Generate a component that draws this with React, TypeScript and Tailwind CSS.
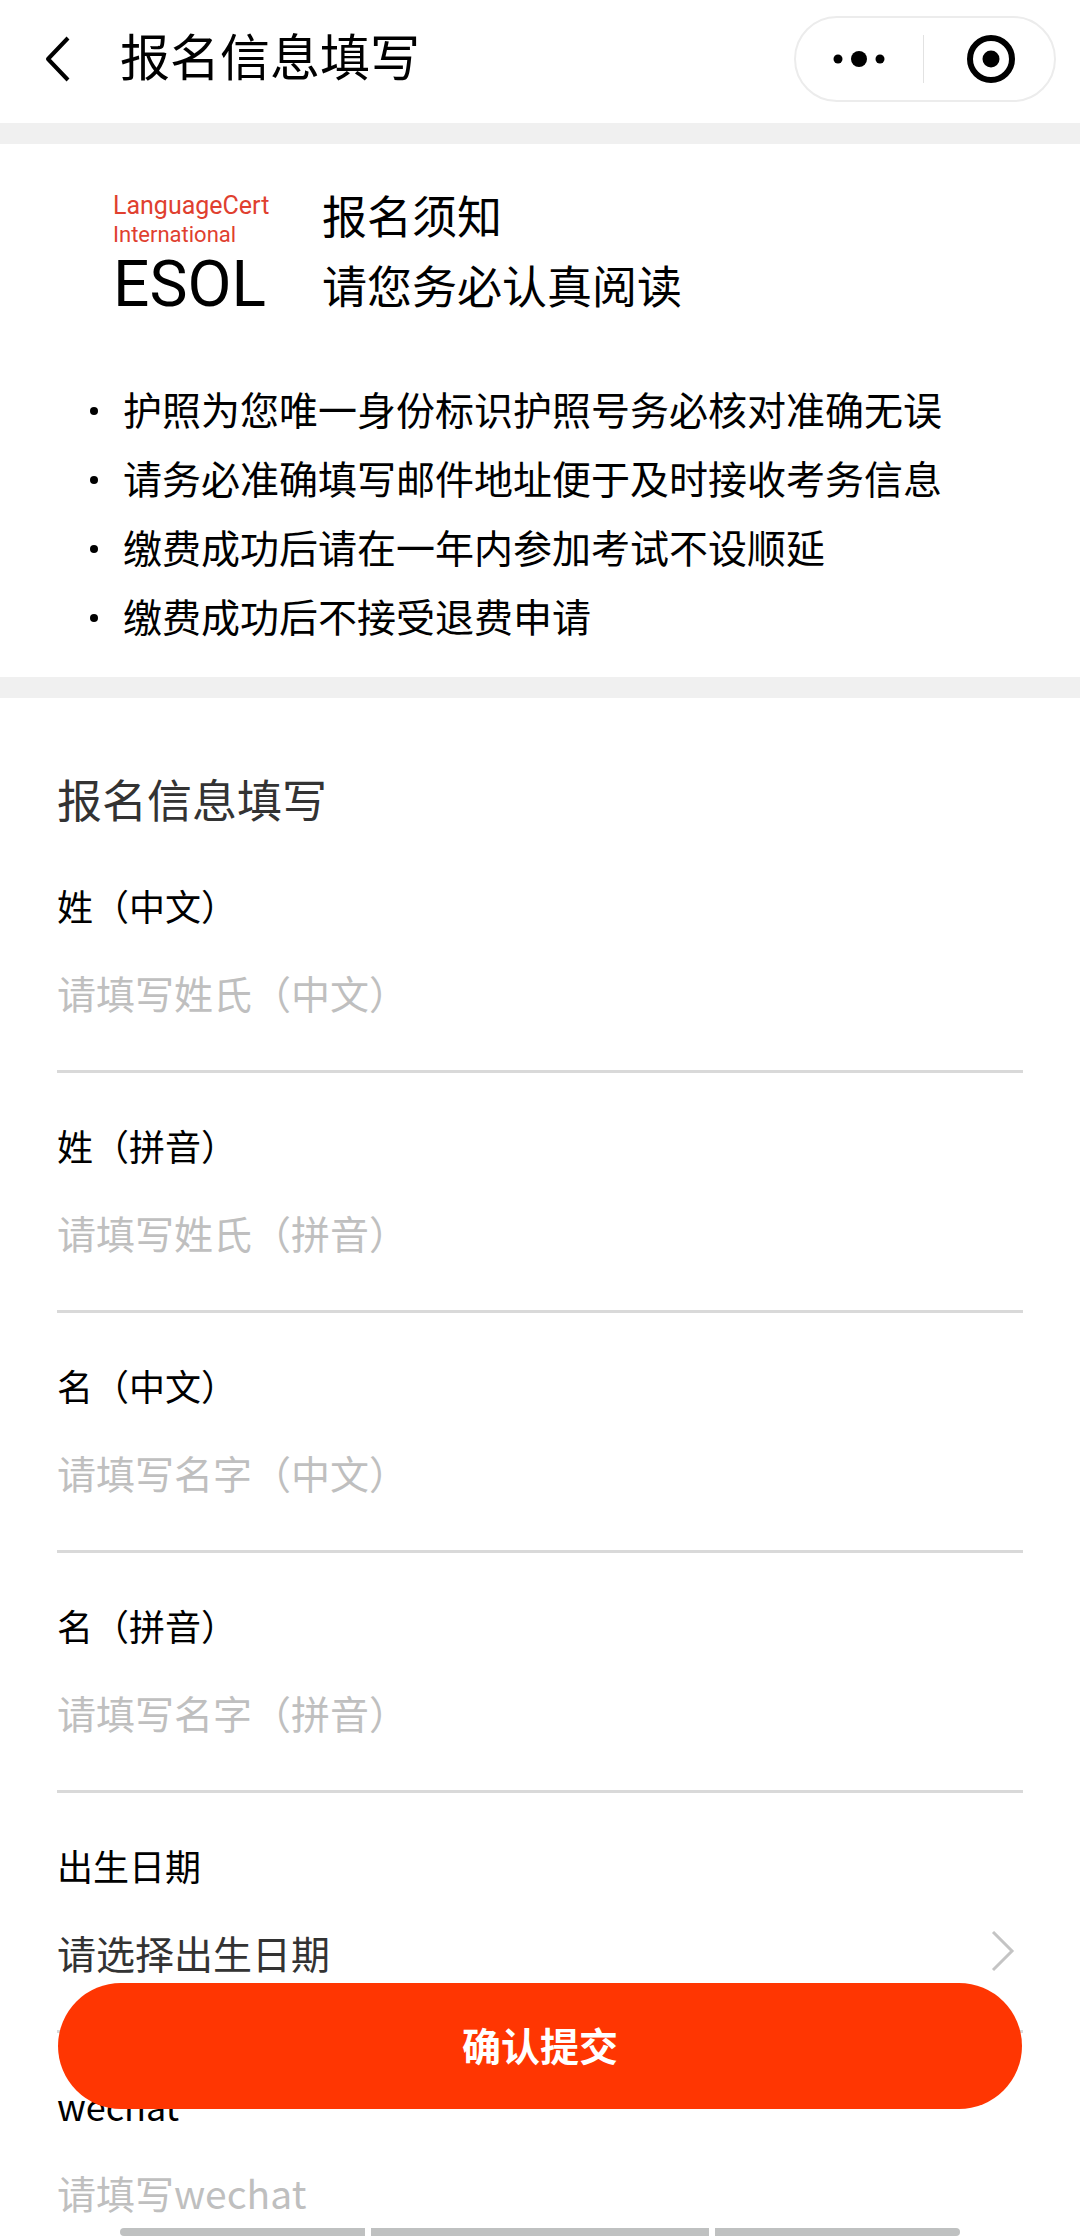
import { useState } from "react";

const notices = [
  "护照为您唯一身份标识护照号务必核对准确无误",
  "请务必准确填写邮件地址便于及时接收考务信息",
  "缴费成功后请在一年内参加考试不设顺延",
  "缴费成功后不接受退费申请",
];

const nameFields = [
  { id: "surname-zh", label: "姓（中文）", placeholder: "请填写姓氏（中文）" },
  { id: "surname-py", label: "姓（拼音）", placeholder: "请填写姓氏（拼音）" },
  { id: "given-zh", label: "名（中文）", placeholder: "请填写名字（中文）" },
  { id: "given-py", label: "名（拼音）", placeholder: "请填写名字（拼音）" },
];

type FieldProps = { id: string; label: string; placeholder: string };

function TextField({ id, label, placeholder }: FieldProps) {
  const [value, setValue] = useState("");

  return (
    <div className="border-b-[3px] border-[#d9d9d9] pt-[45px] pb-[39px]">
      <label htmlFor={id} className="block text-[36px] leading-[54px] text-black">
        {label}
      </label>
      <input
        id={id}
        type="text"
        value={value}
        onChange={(e) => setValue(e.target.value)}
        placeholder={placeholder}
        className="mt-[21px] block h-[78px] w-full bg-transparent text-[39px] text-[#333] outline-none placeholder:text-[#bfbfbf]"
      />
    </div>
  );
}

function Header() {
  return (
    <header className="flex h-[123px] shrink-0 items-start justify-between pr-6 pl-11">
      <div className="flex h-[117px] items-center">
        <button type="button" aria-label="返回" className="flex">
          <svg width="28" height="48" viewBox="0 0 28 48" fill="none" stroke="#000" strokeWidth="4">
            <path d="M24 3 L4 24 L24 45" strokeLinejoin="round" />
          </svg>
        </button>
        <h1 className="ml-12 pb-2.5 text-[50px] leading-[64px] text-black">报名信息填写</h1>
      </div>

      {/* Mini program capsule */}
      <div className="mt-4 flex h-[86px] w-[262px] items-center rounded-full border-2 border-[#ececec]">
        <button type="button" aria-label="更多" className="flex flex-1 justify-center">
          <svg width="54" height="20" viewBox="0 0 54 20">
            <circle cx="6" cy="10" r="4.5" />
            <circle cx="27" cy="10" r="8" />
            <circle cx="48" cy="10" r="4.5" />
          </svg>
        </button>
        <span className="h-12 w-px bg-[#e2e2e2]" />
        <button type="button" aria-label="关闭" className="flex flex-1 justify-center pl-1">
          <svg width="50" height="50" viewBox="0 0 50 50">
            <circle cx="25" cy="25" r="21" fill="none" stroke="#000" strokeWidth="6" />
            <circle cx="25" cy="25" r="8.5" />
          </svg>
        </button>
      </div>
    </header>
  );
}

function Logo() {
  return (
    <div className="flex w-[210px] shrink-0 flex-col pt-[11px] pl-px font-['Roboto',sans-serif]">
      <span className="text-[25px] leading-[29px] text-[#e0402f]">LanguageCert</span>
      <span className="text-[22px] leading-[29px] text-[#e0402f]">International</span>
      <span className="text-[64px] leading-[71px] text-black">ESOL</span>
    </div>
  );
}

export default function App() {
  return (
    <div className="relative flex h-screen flex-col overflow-hidden bg-white font-['Noto_Sans_CJK_SC',sans-serif]">
      <Header />

      <main className="min-h-0 flex-1 overflow-hidden">
        <section className="border-y-[21px] border-[#f0f0f0] pt-[36px] pb-[27px]">
          <div className="flex pl-28">
            <Logo />
            <div className="text-[45px] leading-[70px] text-black">
              <h2>报名须知</h2>
              <p>请您务必认真阅读</p>
            </div>
          </div>
          <ul className="mt-[54px] pl-[90px]">
            {notices.map((text) => (
              <li key={text} className="flex items-center text-[39px] leading-[69px] text-black">
                <span className="mt-1 mr-[25px] h-2 w-2 shrink-0 rounded-full bg-black" />
                {text}
              </li>
            ))}
          </ul>
        </section>

        <form className="px-[57px] pt-[67px]">
          <h2 className="pb-px text-[45px] leading-[67px] text-[#333]">报名信息填写</h2>
          {nameFields.map((field) => (
            <TextField key={field.id} {...field} />
          ))}

          <div className="border-b-[3px] border-[#d9d9d9] pt-[45px] pb-[39px]">
            <span id="birthday-label" className="block text-[36px] leading-[54px] text-black">
              出生日期
            </span>
            <button
              type="button"
              aria-describedby="birthday-label"
              className="mt-[21px] flex h-[78px] w-full items-center justify-between pr-2 text-[39px] text-[#333]"
            >
              请选择出生日期
              <svg width="24" height="42" viewBox="0 0 24 42" fill="none" stroke="#c4c4c4" strokeWidth="3">
                <path d="M2 1 L21 20 L2 39" />
              </svg>
            </button>
          </div>

          <TextField id="wechat" label="wechat" placeholder="请填写wechat" />
        </form>
      </main>

      {/* Floating submit */}
      <button
        type="button"
        className="absolute inset-x-[58px] bottom-[127px] h-[126px] rounded-full bg-[#ff3602] pb-1 text-[39px] font-bold text-white"
      >
        确认提交
      </button>

      {/* System navigation hint */}
      <div className="absolute inset-x-[120px] bottom-0 flex h-2 gap-1.5">
        <span className="flex-[245] rounded-l-full bg-[#bfc1c1]" />
        <span className="flex-[338] bg-[#bfc1c1]" />
        <span className="flex-[245] rounded-r-full bg-[#bfc1c1]" />
      </div>
    </div>
  );
}
